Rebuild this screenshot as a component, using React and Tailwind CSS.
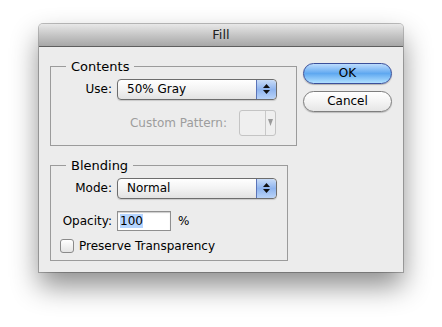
import { useState } from 'react'

function Stepper() {
  return (
    <div className="flex w-[20px] flex-col items-center justify-center gap-[2px] rounded-r-[4px] border-l border-[#5b74b8] bg-gradient-to-b from-[#c9dcf7] via-[#8fb4ee] to-[#b9d3f8]">
      <svg width="7" height="4" viewBox="0 0 7 4"><path d="M3.5 0L7 4H0z" fill="#111" /></svg>
      <svg width="7" height="4" viewBox="0 0 7 4"><path d="M0 0h7L3.5 4z" fill="#111" /></svg>
    </div>
  )
}

function PopUp({ value }) {
  return (
    <div className="flex h-[21px] w-[160px] overflow-hidden rounded-[4px] border border-[#6d6d6d] bg-gradient-to-b from-white via-[#f3f3f3] to-[#e2e2e2] shadow-[0_1px_1px_rgba(0,0,0,0.15)]">
      <div className="flex-1 pl-[9px] leading-[19px]">{value}</div>
      <Stepper />
    </div>
  )
}

function PushButton({ label, primary }) {
  return (
    <button
      type="button"
      className={
        primary
          ? 'h-[21px] w-[89px] rounded-full border border-[#3a4f9a] bg-gradient-to-b from-[#bcdcfd] via-[#5fa8f0] to-[#b0e0ff] leading-[19px] text-black shadow-[0_1px_1px_rgba(0,0,0,0.25)]'
          : 'h-[21px] w-[89px] rounded-full border border-[#7e7e7e] bg-gradient-to-b from-white via-[#f4f4f4] to-[#e6e6e6] leading-[19px] text-black shadow-[0_1px_1px_rgba(0,0,0,0.2)]'
      }
    >
      {label}
    </button>
  )
}

export default function App() {
  const [preserve, setPreserve] = useState(false)

  return (
    <div className="h-[327px] w-[442px] bg-white pl-[39px] pt-[24px] font-['DejaVu_Sans',sans-serif] text-[12px] text-black">
      <div className="flex h-[248px] w-[364px] flex-col overflow-hidden rounded-t-[4px] bg-[#ececec] shadow-[0_14px_28px_rgba(0,0,0,0.45),0_0_0_1px_rgba(0,0,0,0.25)]">
        <div className="flex h-[23px] items-center justify-center border-b border-[#5e5e5e] bg-gradient-to-b from-[#e8e8e8] via-[#c6c6c6] to-[#a7a7a7] text-[13px] text-[#222]">
          Fill
        </div>

        <div className="flex flex-1 pl-[11px] pt-[10px]">
          <div className="flex flex-col gap-[10px]">
            <fieldset className="h-[89px] w-[247px] border border-[#9b9b9b] px-0 pb-0">
              <legend className="ml-[15px] px-[5px] text-[13px]">Contents</legend>
              <div className="mt-[2px] flex items-center">
                <span className="w-[66px] pr-[5px] text-right">Use:</span>
                <PopUp value="50% Gray" />
              </div>
              <div className="mt-[10px] flex items-center">
                <span className="w-[188px] pr-[12px] text-right text-[#9d9d9d]">Custom Pattern:</span>
                <div className="flex h-[26px] w-[37px] rounded-[3px] border border-[#c4c4c4] bg-[#efefef]">
                  <div className="flex-1" />
                  <div className="flex w-[10px] items-center justify-center border-l border-[#c8c8c8]">
                    <svg width="5" height="7" viewBox="0 0 5 7"><path d="M0 0h5L2.5 7z" fill="#9a9a9a" /></svg>
                  </div>
                </div>
              </div>
            </fieldset>

            <fieldset className="h-[105px] w-[238px] border border-[#9b9b9b] px-0 pb-0">
              <legend className="ml-[15px] px-[5px] text-[13px]">Blending</legend>
              <div className="mt-[2px] flex items-center">
                <span className="w-[66px] pr-[5px] text-right">Mode:</span>
                <PopUp value="Normal" />
              </div>
              <div className="mt-[12px] flex items-center">
                <span className="w-[66px] pr-[5px] text-right">Opacity:</span>
                <div className="h-[20px] w-[54px] border border-[#8f8f8f] bg-white pl-[2px] leading-[18px] shadow-[inset_0_1px_1px_rgba(0,0,0,0.2)]">
                  <span className="bg-[#b5d5ff]">100</span>
                </div>
                <span className="ml-[7px]">%</span>
              </div>
              <label className="mt-[6px] flex items-center pl-[9px]">
                <input
                  type="checkbox"
                  checked={preserve}
                  onChange={(event) => setPreserve(event.target.checked)}
                  className="h-[14px] w-[14px] appearance-none rounded-[3px] border border-[#8a8a8a] bg-gradient-to-b from-white to-[#e4e4e4]"
                />
                <span className="ml-[5px]">Preserve Transparency</span>
              </label>
            </fieldset>
          </div>

          <div className="ml-[6px] flex flex-col gap-[7px] pt-[6px]">
            <PushButton label="OK" primary />
            <PushButton label="Cancel" />
          </div>
        </div>
      </div>
    </div>
  )
}
